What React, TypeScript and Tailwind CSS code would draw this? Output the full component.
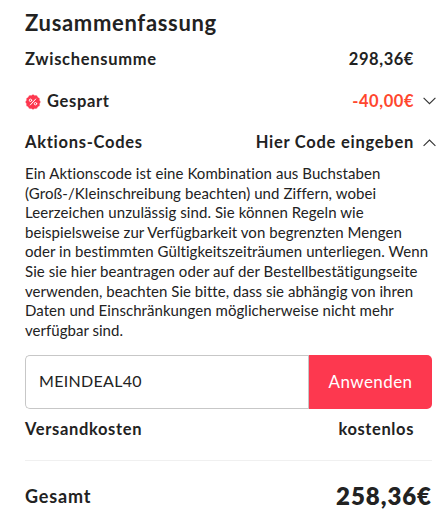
import { ReactNode } from "react";

const promoText = [
  { text: "Ein Aktionscode ist eine Kombination aus Buchstaben", tracking: "tracking-[0.07px]" },
  { text: "(Groß-/Kleinschreibung beachten) und Ziffern, wobei", tracking: "tracking-[0.08px]" },
  { text: "Leerzeichen unzulässig sind. Sie können Regeln wie", tracking: "tracking-[0.08px]" },
  { text: "beispielsweise zur Verfügbarkeit von begrenzten Mengen", tracking: "tracking-[0.05px]" },
  { text: "oder in bestimmten Gültigkeitszeiträumen unterliegen. Wenn", tracking: "tracking-[0.06px]" },
  { text: "Sie sie hier beantragen oder auf der Bestellbestätigungseite", tracking: "tracking-[0.07px]" },
  { text: "verwenden, beachten Sie bitte, dass sie abhängig von ihren", tracking: "tracking-[0.04px]" },
  { text: "Daten und Einschränkungen möglicherweise nicht mehr", tracking: "tracking-[0.06px]" },
  { text: "verfügbar sind.", tracking: "tracking-[0.03px]" },
];

function DiscountBadge() {
  return (
    <svg width="16" height="16" viewBox="0 0 16 16" fill="none" className="shrink-0">
      <g fill="#fd384f">
        <circle cx="8" cy="8" r="6.6" />
        <circle cx="8" cy="2.2" r="1.7" />
        <circle cx="10.9" cy="3" r="1.7" />
        <circle cx="13" cy="5.1" r="1.7" />
        <circle cx="13.8" cy="8" r="1.7" />
        <circle cx="13" cy="10.9" r="1.7" />
        <circle cx="10.9" cy="13" r="1.7" />
        <circle cx="8" cy="13.8" r="1.7" />
        <circle cx="5.1" cy="13" r="1.7" />
        <circle cx="3" cy="10.9" r="1.7" />
        <circle cx="2.2" cy="8" r="1.7" />
        <circle cx="3" cy="5.1" r="1.7" />
        <circle cx="5.1" cy="3" r="1.7" />
      </g>
      <g stroke="#fff" strokeWidth="1" strokeLinecap="round">
        <path d="M10.7 5 5.3 11" />
        <circle cx="5.5" cy="6.3" r="1.2" />
        <circle cx="10.5" cy="9.7" r="1.2" />
      </g>
    </svg>
  );
}

function Chevron({ open }: { open?: boolean }) {
  return (
    <svg
      width="13"
      height="8"
      viewBox="0 0 13 8"
      fill="none"
      stroke="#333"
      strokeWidth="1.1"
      className={open ? "mt-px" : "-mt-px"}
    >
      <path d={open ? "M.6 6.9 6.5 1l5.9 5.9" : "M.6.8l5.9 5.9L12.4.8"} />
    </svg>
  );
}

function Row({ label, value, icon }: { label: ReactNode; value: ReactNode; icon?: ReactNode }) {
  return (
    <div className="flex h-6 items-center justify-between pt-px text-[16.5px]">
      <div className="flex items-center">{label}</div>
      <div className="flex items-center">
        {value}
        <div className="flex w-[22px] justify-end">{icon}</div>
      </div>
    </div>
  );
}

export default function App() {
  return (
    <div className="h-[520px] w-[443px] overflow-hidden bg-white pl-[25px] font-['Lato',sans-serif] text-base font-bold text-[#222]">
      <div className="w-[411px]">
        <h2 className="pt-[9px] text-[22px] leading-7 font-bold tracking-[0.68px]">Zusammenfassung</h2>
        <div className="mt-2.5">
          <Row
            label={<span className="tracking-[0.7px]">Zwischensumme</span>}
            value={<span className="tracking-[0.55px]">298,36€</span>}
          />
        </div>
        <div className="mt-[18px]">
          <Row
            label={
              <>
                <DiscountBadge />
                <span className="ml-1.5 tracking-[0.65px]">Gespart</span>
              </>
            }
            value={<span className="tracking-[0.55px] text-[#ff472e]">-40,00€</span>}
            icon={<Chevron />}
          />
        </div>
        <div className="mt-[17px]">
          <Row
            label={<span className="tracking-[0.72px]">Aktions-Codes</span>}
            value={<span className="tracking-[0.74px]">Hier Code eingeben</span>}
            icon={<Chevron open />}
          />
        </div>
      </div>

      <p className="mt-2.5 text-[15px] leading-[19.6px] font-normal whitespace-nowrap">
        {promoText.map((line) => (
          <span key={line.text} className={`block ${line.tracking}`}>
            {line.text}
          </span>
        ))}
      </p>

      <div className="mt-[14.6px] flex h-[54px] w-[407px]">
        <div className="flex flex-1 items-center rounded-l-[5px] border border-r-0 border-[#c7c7c7] pb-px pl-[13px] font-normal">
          <span className="tracking-[0.3px]">MEINDEAL40</span>
        </div>
        <button className="w-[124px] rounded-r-[5px] border-l border-[#c7c7c7] bg-[#fd384f] pb-px text-[17px] font-normal text-white">
          <span className="tracking-[0.4px]">Anwenden</span>
        </button>
      </div>

      <div className="mt-2 w-[411px]">
        <Row
          label={<span className="tracking-[0.65px]">Versandkosten</span>}
          value={<span className="tracking-[0.6px]">kostenlos</span>}
        />
      </div>

      <div className="mt-[19px] flex h-[72px] w-[407px] items-center justify-between border-t border-[#f0f0f0]">
        <span className="text-lg tracking-[0.85px]">Gesamt</span>
        <span className="text-2xl font-extrabold tracking-[0.95px]">258,36€</span>
      </div>
    </div>
  );
}
